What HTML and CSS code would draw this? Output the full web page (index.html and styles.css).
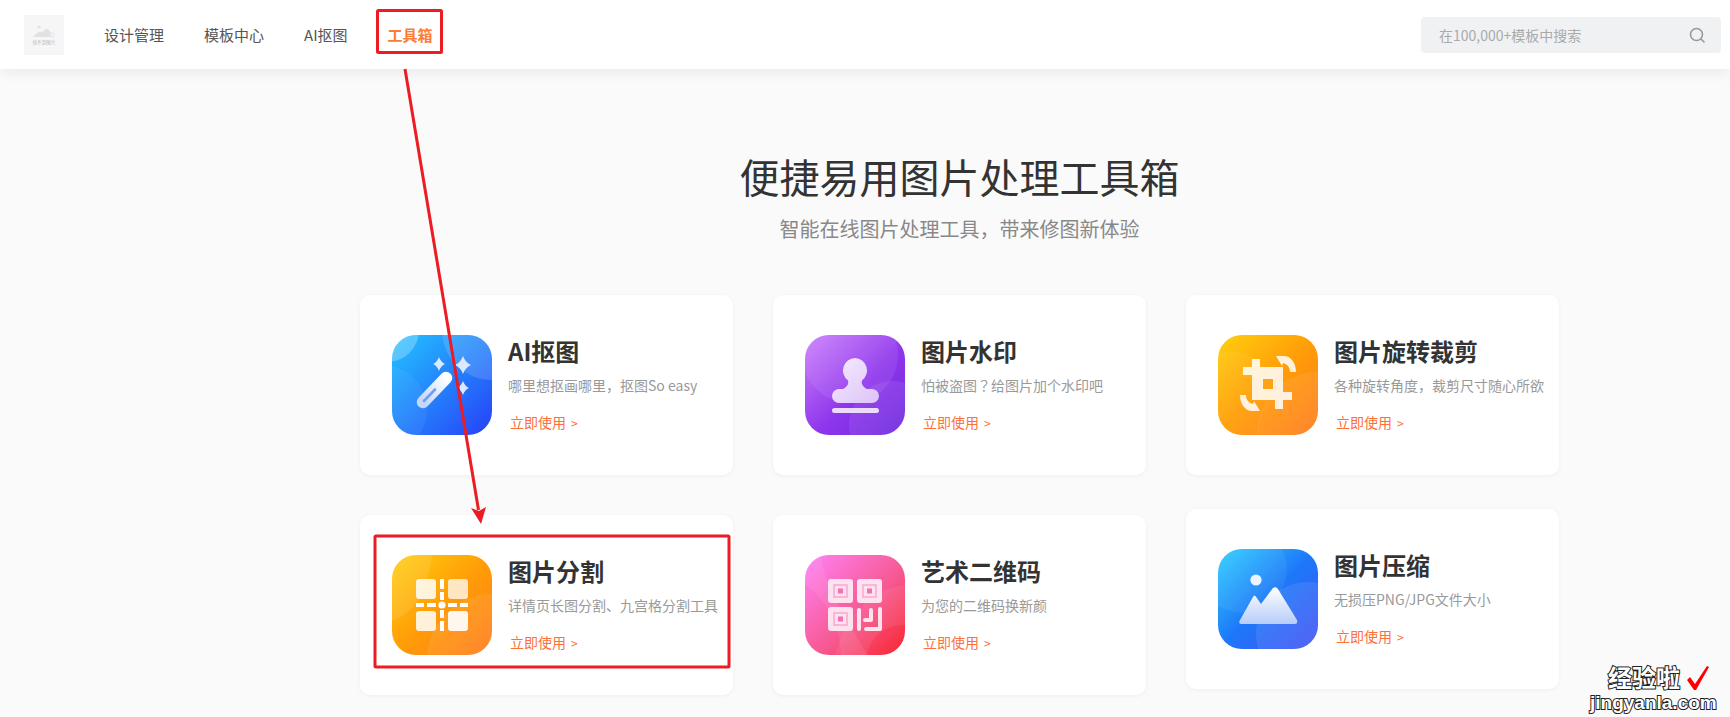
FILE: index.html
```html
<!DOCTYPE html>
<html lang="en">
<head>
    <meta charset="UTF-8">
    <meta name="viewport" content="width=device-width, initial-scale=1.0">
    <title>工具箱</title>
    <link rel="stylesheet" href="styles.css">
</head>
<body>
    <header class="top-bar">
        <div class="logo">
            <svg class="logo-pic" viewBox="0 0 24 14">
                <circle cx="7" cy="3" r="1.6" fill="#e2e2e2"/>
                <path d="M1 13 C4 10 6 7 9 8 C11 9 12 5 15 5 C17 5 19 9 20 10 L20 13 Z" fill="#e2e2e2"/>
                <circle cx="20" cy="11" r="2" fill="#f5f5f5" stroke="#e2e2e2"/>
            </svg>
            <span class="logo-text">找不到图片</span>
        </div>
        <nav class="nav">
            <a class="nav-item">设计管理</a>
            <a class="nav-item">模板中心</a>
            <a class="nav-item">AI抠图</a>
            <a class="nav-item active">工具箱</a>
        </nav>
        <div class="search">
            <span class="search-text">在100,000+模板中搜索</span>
            <svg class="search-icon" viewBox="0 0 16 16" fill="none" stroke="#999" stroke-width="1.6">
                <circle cx="7.5" cy="7.5" r="6"/>
                <path d="M12 12 L15 15" stroke-linecap="round"/>
            </svg>
        </div>
    </header>

    <main class="main">
        <h1 class="title">便捷易用图片处理工具箱</h1>
        <p class="subtitle">智能在线图片处理工具<span class="punct">，</span>带来修图新体验</p>

        <div class="columns">
            <div class="column">
                <div class="card">
                    <svg class="icon" viewBox="0 0 100 100">
                        <defs>
                            <linearGradient id="blue1" x1="0" y1="0" x2="1" y2="1">
                                <stop offset="0" stop-color="#22c4ff"/>
                                <stop offset="1" stop-color="#2740f8"/>
                            </linearGradient>
                            <linearGradient id="wand" x1="1" y1="0" x2="0" y2="1">
                                <stop offset="0" stop-color="#fff"/>
                                <stop offset="1" stop-color="#c3d6fb"/>
                            </linearGradient>
                        </defs>
                        <rect width="100" height="100" fill="url(#blue1)"/>
                        <circle cx="-5" cy="-5" r="32" fill="#fff" opacity=".25"/>
                        <circle cx="-10" cy="75" r="45" fill="#fff" opacity=".05"/>
                        <circle cx="100" cy="-5" r="50" fill="#fff" opacity=".14"/>
                        <path d="M31 67 L54 43" stroke="url(#wand)" stroke-width="12.5" stroke-linecap="round"/>
                        <path d="M32 66 L43 54.5" stroke="#6f9ff0" stroke-width="2.6" stroke-linecap="round"/>
                        <path class="star" d="M47 22 Q48.8 27.2 53 29 Q48.8 30.8 47 36 Q45.2 30.8 41 29 Q45.2 27.2 47 22 Z"/>
                        <path class="star" d="M71 21 Q73.4 27.6 79 30 Q73.4 32.4 71 39 Q68.6 32.4 63 30 Q68.6 27.6 71 21 Z"/>
                        <path class="star" d="M71 46 Q72.8 51.2 77 53 Q72.8 54.8 71 60 Q69.2 54.8 65 53 Q69.2 51.2 71 46 Z"/>
                    </svg>
                    <div class="card-body">
                        <h3 class="card-title">AI抠图</h3>
                        <p class="card-desc">哪里想抠画哪里<span class="punct">，</span>抠图So easy</p>
                        <a class="card-link">立即使用<span class="chevron">&gt;</span></a>
                    </div>
                </div>
                <div class="card">
                    <svg class="icon" viewBox="0 0 100 100">
                        <defs>
                            <linearGradient id="orange1" x1="0" y1="0" x2="1" y2="1">
                                <stop offset="0" stop-color="#ffcf10"/>
                                <stop offset=".5" stop-color="#ff9d08"/>
                                <stop offset="1" stop-color="#ff7a1c"/>
                            </linearGradient>
                        </defs>
                        <rect width="100" height="100" fill="url(#orange1)"/>
                        <path d="M0 66 C22 58 34 40 40 0 L0 0 Z" fill="#fff" opacity=".1"/>
                        <path d="M35 100 C38 70 60 42 100 38 L100 100 Z" fill="#fff" opacity=".08"/>
                        <g fill="#fff" opacity=".85">
                            <rect x="24" y="24" width="20" height="20" rx="3"/>
                            <rect x="24" y="56" width="20" height="20" rx="3"/>
                        </g>
                        <g fill="#fff" opacity=".75">
                            <rect x="56" y="24" width="20" height="20" rx="3"/>
                        </g>
                        <rect x="56" y="56" width="20" height="20" rx="3" fill="#fff" opacity=".92"/>
                        <g fill="#fff">
                            <rect x="48" y="24" width="4" height="10"/>
                            <rect x="48" y="37" width="4" height="8"/>
                            <rect x="48" y="55" width="4" height="8"/>
                            <rect x="48" y="66" width="4" height="10"/>
                            <rect x="24" y="48" width="8" height="4"/>
                            <rect x="35" y="48" width="9" height="4"/>
                            <rect x="56" y="48" width="9" height="4"/>
                            <rect x="68" y="48" width="8" height="4"/>
                            <circle cx="50" cy="50" r="3.6"/>
                        </g>
                    </svg>
                    <div class="card-body">
                        <h3 class="card-title">图片分割</h3>
                        <p class="card-desc">详情页长图分割、九宫格分割工具</p>
                        <a class="card-link">立即使用<span class="chevron">&gt;</span></a>
                    </div>
                </div>
            </div>

            <div class="column">
                <div class="card">
                    <svg class="icon" viewBox="0 0 100 100">
                        <defs>
                            <linearGradient id="purple" x1="0" y1="0" x2="1" y2="1">
                                <stop offset="0" stop-color="#cc80fc"/>
                                <stop offset=".55" stop-color="#8f36ec"/>
                                <stop offset="1" stop-color="#6c28dc"/>
                            </linearGradient>
                            <linearGradient id="stamp" x1="0" y1="0" x2="1" y2="1">
                                <stop offset="0" stop-color="#f6ecff"/>
                                <stop offset="1" stop-color="#dcc3f8"/>
                            </linearGradient>
                        </defs>
                        <rect width="100" height="100" fill="url(#purple)"/>
                        <circle cx="45" cy="20" r="48" fill="#fff" opacity=".08"/>
                        <circle cx="88" cy="90" r="44" fill="#fff" opacity=".08"/>
                        <path d="M50 23 A12.5 12.5 0 0 1 57 45.5 C56 49 58 52 62 54 L67 54 A7 7 0 0 1 67 68 L34 68 A7 7 0 0 1 34 54 L38 54 C42 52 44 49 43 45.5 A12.5 12.5 0 0 1 50 23 Z" fill="url(#stamp)"/>
                        <rect x="27" y="73" width="47" height="5" rx="2.5" fill="#ecdcfb"/>
                    </svg>
                    <div class="card-body">
                        <h3 class="card-title">图片水印</h3>
                        <p class="card-desc">怕被盗图<span class="punct">？</span>给图片加个水印吧</p>
                        <a class="card-link">立即使用<span class="chevron">&gt;</span></a>
                    </div>
                </div>
                <div class="card">
                    <svg class="icon" viewBox="0 0 100 100">
                        <defs>
                            <linearGradient id="pink" x1="0" y1="0" x2="1" y2="1">
                                <stop offset="0" stop-color="#ff82f8"/>
                                <stop offset=".55" stop-color="#f75a94"/>
                                <stop offset="1" stop-color="#f8262e"/>
                            </linearGradient>
                        </defs>
                        <rect width="100" height="100" fill="url(#pink)"/>
                        <path d="M16 0 C18 30 40 60 62 100 L36 100 C36 70 18 40 0 30 L0 0 Z" fill="#fff" opacity=".08"/>
                        <path d="M30 100 C40 60 70 32 100 30 L100 70 C80 70 66 80 62 100 Z" fill="#fff" opacity=".07"/>
                        <g class="qr-panel">
                            <rect x="23" y="24" width="25" height="24" rx="3"/>
                            <rect x="52" y="24" width="25" height="24" rx="3"/>
                            <rect x="23" y="52" width="25" height="24" rx="3"/>
                        </g>
                        <g fill="none" stroke="#f9a3cb" stroke-width="1.4">
                            <rect x="29" y="30" width="13" height="12"/>
                            <rect x="58" y="30" width="13" height="12"/>
                            <rect x="29" y="58" width="13" height="12"/>
                        </g>
                        <g fill="#f76fb4">
                            <rect x="33" y="33.5" width="5" height="5"/>
                            <rect x="62" y="33.5" width="5" height="5"/>
                            <rect x="33" y="61.5" width="5" height="5"/>
                        </g>
                        <g fill="none" stroke="#fde3ef" stroke-width="4" stroke-linecap="round" stroke-linejoin="round">
                            <path d="M54 55 V74"/>
                            <path d="M66 55 V65 H60"/>
                            <path d="M75 54 V74 H61"/>
                        </g>
                    </svg>
                    <div class="card-body">
                        <h3 class="card-title">艺术二维码</h3>
                        <p class="card-desc">为您的二维码换新颜</p>
                        <a class="card-link">立即使用<span class="chevron">&gt;</span></a>
                    </div>
                </div>
            </div>

            <div class="column tight">
                <div class="card">
                    <svg class="icon" viewBox="0 0 100 100">
                        <rect width="100" height="100" fill="url(#orange1)"/>
                        <path d="M39 100 C40 60 65 40 100 36 L100 100 Z" fill="#fff" opacity=".08"/>
                        <path d="M0 18 C30 12 50 30 60 50 C48 62 42 80 40 100 L0 100 Z" fill="#fff" opacity=".05"/>
                        <path fill="#fff" fill-opacity=".85" fill-rule="evenodd" d="M34 24 H42 V32 H65 V57 H74 V65 H65 V74 H57 V65 H34 V40 H25 V32 H34 Z M45 44 V54 H55 V44 Z"/>
                        <path d="M58 21 L66 21 C72 21 78 27 78 37 L72 37 C72 32 69 29 65 28 L64 31 Z" fill="#fff" fill-opacity=".85"/>
                        <path d="M58 21 L66 21 C72 21 78 27 78 37 L72 37 C72 32 69 29 65 28 L64 31 Z" fill="#fff" fill-opacity=".85" transform="rotate(180 50 48.5)"/>
                    </svg>
                    <div class="card-body">
                        <h3 class="card-title">图片旋转裁剪</h3>
                        <p class="card-desc">各种旋转角度<span class="punct">，</span>裁剪尺寸随心所欲</p>
                        <a class="card-link">立即使用<span class="chevron">&gt;</span></a>
                    </div>
                </div>
                <div class="card">
                    <svg class="icon" viewBox="0 0 100 100">
                        <defs>
                            <linearGradient id="blue2" x1="0" y1="0" x2="1" y2="1">
                                <stop offset="0" stop-color="#2fd0ff"/>
                                <stop offset=".5" stop-color="#1d78f8"/>
                                <stop offset="1" stop-color="#4450f6"/>
                            </linearGradient>
                            <linearGradient id="peak" x1="0" y1="0" x2="0" y2="1">
                                <stop offset="0" stop-color="#fff"/>
                                <stop offset="1" stop-color="#b7cdfa"/>
                            </linearGradient>
                        </defs>
                        <rect width="100" height="100" fill="url(#blue2)"/>
                        <circle cx="25" cy="20" r="44" fill="#fff" opacity=".06"/>
                        <circle cx="90" cy="85" r="52" fill="#fff" opacity=".09"/>
                        <circle cx="38" cy="31" r="5.6" fill="#eaf3ff"/>
                        <path d="M37.5 47 L43 55 L55 39 Q58 37 60 40 L79 71 Q80 75 77 75 L23 75 Q20 75 22 71 L35 48 Q36 46 37.5 47 Z" fill="url(#peak)"/>
                    </svg>
                    <div class="card-body">
                        <h3 class="card-title">图片压缩</h3>
                        <p class="card-desc">无损压PNG/JPG文件大小</p>
                        <a class="card-link">立即使用<span class="chevron">&gt;</span></a>
                    </div>
                </div>
            </div>
        </div>
    </main>

    <!-- screenshot annotations -->
    <svg class="marks" viewBox="0 0 1730 717">
        <rect x="377.5" y="10.5" width="64" height="42" rx="1" fill="none" stroke="#ed1c24" stroke-width="3"/>
        <rect x="375" y="536" width="354" height="131" rx="1" fill="none" stroke="#ed1c24" stroke-width="3"/>
        <path d="M405 69 L478.5 510" stroke="#ed1c24" stroke-width="3"/>
        <path d="M481 524 L471 508 L479 511 L486 507 Z" fill="#ed1c24"/>
        <path d="M1687 680 L1690 677 L1695 684 L1707 666 L1709 667 L1696 690 L1694 690 Z" fill="#f00"/>
    </svg>
    <div class="watermark">
        <span class="wm-cn">经验啦</span>
        <span class="wm-en">jingyanla.com</span>
    </div>
</body>
</html>
```

FILE: styles.css
```css
* {
    box-sizing: border-box;
}

html, body {
    height: 100%;
}

body {
    margin: 0;
    background-color: #fafafa;
    font-family: "Noto Sans CJK SC", "Noto Sans", sans-serif;
    color: #333;
    overflow: hidden;
}

.top-bar {
    height: 69px;
    padding: 0 9px 0 24px;
    background-color: #fff;
    box-shadow: 0 2px 14px rgba(0, 0, 0, 0.08);
    display: flex;
    align-items: center;
}

.logo {
    width: 40px;
    height: 40px;
    background-color: #f6f6f6;
    display: flex;
    flex-direction: column;
    align-items: center;
    justify-content: center;
}

.logo-pic {
    width: 24px;
    height: 14px;
}

.logo-text {
    font-size: 4.6px;
    line-height: 8px;
    color: #bbb;
}

.nav {
    margin-left: 40px;
    display: flex;
    gap: 40px;
    flex: 1;
}

.nav-item {
    font-size: 15px;
    line-height: 20px;
    color: #555;
}

.nav-item.active {
    color: #ff7a33;
    font-weight: 700;
}

.search {
    width: 300px;
    height: 36px;
    padding: 0 16px 0 18px;
    background-color: #f0f1f3;
    border-radius: 4px;
    display: flex;
    align-items: center;
    justify-content: space-between;
}

.search-text {
    font-size: 14px;
    color: #aaa;
}

.search-icon {
    width: 16px;
    height: 16px;
}

.main {
    width: 1199px;
    margin-left: 360px;
    padding-top: 79px;
}

.title {
    margin: 0;
    font-size: 40px;
    line-height: 56px;
    font-weight: 400;
    text-align: center;
    color: #333;
}

.subtitle {
    margin: 10px 0 0;
    font-size: 20px;
    line-height: 30px;
    text-align: center;
    color: #888;
}

/* centred full-width punctuation */
.punct {
    font-family: "Noto Sans CJK KR", sans-serif;
}

.columns {
    margin-top: 51px;
    display: flex;
    gap: 40px;
}

.column {
    width: 373px;
    display: flex;
    flex-direction: column;
    gap: 40px;
}

.column.tight {
    gap: 34px;
}

.card {
    height: 180px;
    padding: 40px 0 0 32px;
    background-color: #fff;
    border-radius: 10px;
    box-shadow: 0 1px 4px rgba(0, 0, 0, 0.05);
    display: flex;
    gap: 16px;
}

.icon {
    width: 100px;
    height: 100px;
    flex-shrink: 0;
    border-radius: 24px;
}

.star {
    fill: #dbe9ff;
}

.qr-panel {
    fill: #fde3ef;
}

.card-body {
    min-width: 0;
    margin-top: -1px;
}

.card-title {
    margin: 0;
    font-size: 24px;
    line-height: 34px;
    font-weight: 700;
    color: #333;
}

.card-desc {
    margin: 7px 0 0;
    font-size: 14px;
    line-height: 20px;
    color: #999;
    white-space: nowrap;
}

.card-link {
    display: block;
    margin: 17px 0 0 2px;
    font-size: 14px;
    line-height: 20px;
    color: #ff6f3a;
}

.chevron {
    margin-left: 5px;
    font-size: 12px;
}

.marks {
    position: absolute;
    left: 0;
    top: 0;
    width: 1730px;
    height: 717px;
    pointer-events: none;
}

.watermark {
    position: absolute;
    left: 1590px;
    top: 663px;
    width: 126px;
    display: flex;
    flex-direction: column;
    gap: 2px;
    color: #fff;
    font-weight: 700;
    -webkit-text-stroke: 2px #222;
    paint-order: stroke fill;
}

.wm-cn {
    margin-left: 18px;
    font-size: 24px;
    line-height: 28px;
}

.wm-en {
    font-family: "Liberation Sans", sans-serif;
    font-size: 19px;
    line-height: 19px;
    white-space: nowrap;
}
```
